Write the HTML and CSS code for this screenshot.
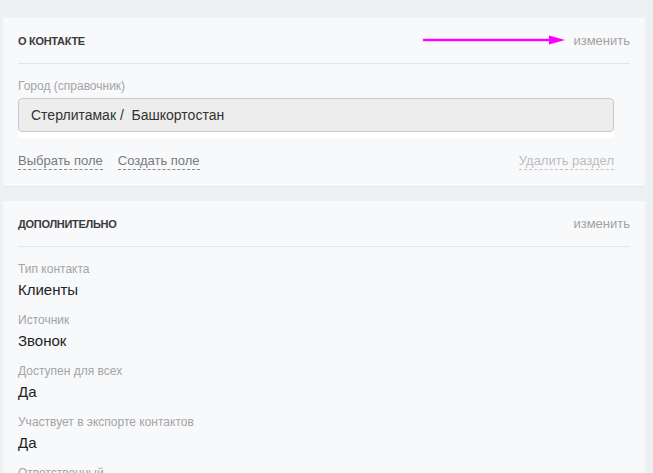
FILE: index.html
```html
<!DOCTYPE html>
<html lang="ru">
<head>
<meta charset="utf-8">
<link rel="stylesheet" href="styles.css">
</head>
<body>
<div class="page">
  <section class="card">
    <div class="card-head">
      <h2 class="card-title">О КОНТАКТЕ</h2>
      <span class="edit">изменить</span>
      <svg class="arrow" width="142" height="10" viewBox="0 0 142 10">
        <rect x="0" y="3.8" width="128" height="2.4" fill="#ff00ff"/>
        <polygon points="126,0.5 142,5 126,9.5" fill="#ff00ff"/>
      </svg>
    </div>
    <div class="card-body">
      <div class="field-edit">
        <div class="label">Город (справочник)</div>
        <div class="input-wrap">
          <div class="input">Стерлитамак /&nbsp; Башкортостан</div>
        </div>
      </div>
      <div class="actions">
        <span class="dlink">Выбрать поле</span>
        <span class="dlink">Создать поле</span>
        <span class="dlink muted">Удалить раздел</span>
      </div>
    </div>
  </section>

  <section class="card card-tall">
    <div class="card-head">
      <h2 class="card-title">ДОПОЛНИТЕЛЬНО</h2>
      <span class="edit">изменить</span>
    </div>
    <div class="card-body fields">
      <div class="field">
        <div class="label">Тип контакта</div>
        <div class="value">Клиенты</div>
      </div>
      <div class="field">
        <div class="label">Источник</div>
        <div class="value">Звонок</div>
      </div>
      <div class="field">
        <div class="label">Доступен для всех</div>
        <div class="value">Да</div>
      </div>
      <div class="field">
        <div class="label">Участвует в экспорте контактов</div>
        <div class="value">Да</div>
      </div>
      <div class="field">
        <div class="label">Ответственный</div>
      </div>
    </div>
  </section>
</div>
</body>
</html>
```

FILE: styles.css
```css
html, body {
  margin: 0;
  padding: 0;
  background: #eef1f4;
  font-family: "Liberation Sans", Arial, sans-serif;
  overflow: hidden;
}

.page {
  padding: 18px 8px 0 3px;
  display: flex;
  flex-direction: column;
  gap: 15px;
}

.card {
  background: #f8f9fb;
  box-shadow: 0 1px 0 #e3e6ea;
  padding: 0 15px;
  position: relative;
}

.card-head {
  height: 45px;
  display: flex;
  align-items: center;
  justify-content: space-between;
  border-bottom: 1px solid #e3e6ea;
  position: relative;
}

.card-title {
  margin: 0;
  font-size: 11px;
  font-weight: 700;
  color: #3a3a3a;
  letter-spacing: -0.3px;
}

.edit {
  font-size: 13px;
  color: #a2a2a2;
}

.arrow {
  position: absolute;
  left: 405px;
  top: 17px;
}

.card-body {
  padding: 15px 16px 16px 0;
}

.label {
  font-size: 12px;
  line-height: 14px;
  color: #a4a4a4;
}

.input-wrap {
  margin-top: 5px;
  background: #ffffff;
  padding-bottom: 6px;
}

.input {
  height: 32px;
  box-sizing: content-box;
  border: 1px solid #c9c9c9;
  border-radius: 4px;
  background: #ededed;
  font-size: 14px;
  line-height: 32px;
  color: #333;
  padding: 0 12px;
}

.actions {
  margin-top: 15px;
  display: flex;
  gap: 15px;
  font-size: 13px;
  line-height: 16px;
}

.dlink {
  color: #7a7a7a;
  border-bottom: 1px dashed #8a8a8a;
}

.dlink.muted {
  margin-left: auto;
  color: #bdbdbd;
  border-bottom-color: #c4c4c4;
}

.card-tall {
  min-height: 300px;
}

.fields {
  display: flex;
  flex-direction: column;
  gap: 14px;
  padding-bottom: 20px;
}

.value {
  margin-top: 5px;
  font-size: 15px;
  line-height: 18px;
  color: #222;
}
```
